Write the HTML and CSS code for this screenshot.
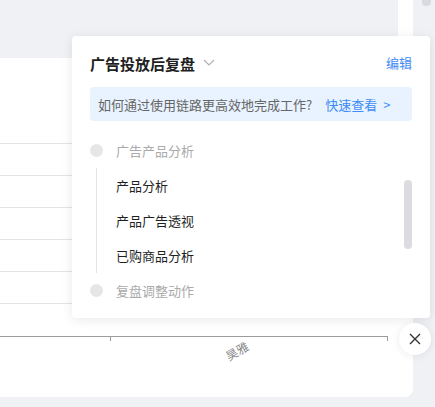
FILE: index.html
```html
<!DOCTYPE html>
<html lang="zh">
<head>
<meta charset="utf-8">
<link rel="stylesheet" href="styles.css">
</head>
<body>
<div class="page">
  <div class="top-row">
    <div class="top-strip"></div>
    <div class="page-thumb"></div>
  </div>
  <div class="card">
    <div class="chart">
      <div class="grid-line"></div>
      <div class="grid-line"></div>
      <div class="grid-line"></div>
      <div class="grid-line"></div>
      <div class="grid-line"></div>
      <div class="grid-line"></div>
      <div class="axis">
        <span class="tick tick-a"></span>
        <span class="tick tick-b"></span>
        <span class="axis-label">昊雅</span>
      </div>
    </div>
  </div>

  <div class="popup">
    <div class="popup-head">
      <div class="title">广告投放后复盘
        <svg class="chev" width="12" height="7" viewBox="0 0 12 7"><path d="M1 1l5 5 5-5" fill="none" stroke="#b0b0b0" stroke-width="1.2"/></svg>
      </div>
      <a class="edit">编辑</a>
    </div>
    <div class="tip">
      <span class="tip-text">如何通过使用链路更高效地完成工作?</span>
      <span class="tip-link">快速查看<span class="tip-arrow">&gt;</span></span>
    </div>
    <div class="timeline">
      <div class="group-row"><span class="dot"></span><span class="group-name">广告产品分析</span></div>
      <div class="children">
        <div class="child">产品分析</div>
        <div class="child">产品广告透视</div>
        <div class="child">已购商品分析</div>
      </div>
      <div class="group-row"><span class="dot"></span><span class="group-name">复盘调整动作</span></div>
    </div>
    <div class="scroll-thumb"></div>
  </div>

  <button class="close" aria-label="关闭">
    <svg width="12" height="12" viewBox="0 0 12 12"><path d="M1 1l10 10M11 1L1 11" stroke="#333" stroke-width="1.4" fill="none"/></svg>
  </button>
</div>
</body>
</html>
```
FILE: styles.css
```css
* { box-sizing: border-box; }
html, body { margin: 0; padding: 0; }
body {
  background: #f0f1f5;
  font-family: "Noto Sans CJK SC", "Noto Sans", sans-serif;
  width: 435px;
  height: 407px;
  overflow: hidden;
}
.page { position: relative; width: 435px; height: 407px; }
.top-row { display: flex; height: 58px; padding-left: 398px; }
.top-strip { width: 15px; height: 58px; background: #fff; }
.page-thumb {
  width: 9px; height: 6px; margin-left: 9px;
  background: #d9dadf; border-radius: 0 0 4px 4px;
}
.card {
  width: 413px;
  height: 339px;
  background: #fff;
  border-radius: 0 8px 8px 0;
  padding-top: 85px;
}
.chart { width: 388px; display: flex; flex-direction: column; gap: 31px; }
.grid-line { height: 1px; background: #e3e3e3; }
.axis { position: relative; height: 1px; background: #9c9c9c; margin-top: 1px; }
.tick { position: absolute; top: 0; width: 1px; height: 5px; background: #9c9c9c; }
.tick-a { left: 110px; }
.tick-b { left: 387px; }
.axis-label {
  position: absolute; left: 225px; top: 8px;
  font-size: 12px; color: #8a8a8a; line-height: 14px;
  transform: rotate(-30deg);
}
.popup {
  position: absolute; left: 72px; top: 36px;
  width: 358px; height: 282px;
  background: #fff;
  border-radius: 4px;
  box-shadow: 0 2px 12px rgba(0, 0, 0, 0.09);
  padding: 17px 18px 0 18px;
}
.popup-head { display: flex; justify-content: space-between; align-items: center; height: 20px; }
.title { font-size: 15px; font-weight: 700; color: #1f1f1f; display: flex; align-items: center; gap: 8px; }
.chev { margin-top: -2px; }
.edit { font-size: 13px; color: #3f8cf6; margin-top: -2px; }
.tip {
  margin-top: 14px; height: 34px;
  background: #e8f3ff; border-radius: 4px;
  display: flex; align-items: center; padding-left: 8px; gap: 13px;
  font-size: 13px;
}
.tip-text { color: #666; }
.tip-link { color: #3f8cf6; display: flex; align-items: center; }
.tip-arrow { margin-left: 6px; }
.timeline { margin-top: 12px; }
.group-row { display: flex; align-items: center; height: 35px; gap: 13px; }
.dot { width: 13px; height: 13px; border-radius: 50%; background: #e6e6e6; }
.group-name { font-size: 13px; color: #aaa; }
.children { margin-left: 6px; border-left: 1px solid #e5e5e5; }
.child { height: 35px; display: flex; align-items: center; padding-left: 19px; font-size: 13px; color: #1f1f1f; }
.scroll-thumb {
  position: absolute; right: 18px; top: 144px;
  width: 8px; height: 69px; border-radius: 4px; background: #dcdce0;
}
.close {
  position: absolute; left: 399px; top: 323px;
  width: 32px; height: 32px; border-radius: 50%;
  border: none; background: #fff; padding: 0;
  box-shadow: 0 1px 8px rgba(0, 0, 0, 0.08);
  display: flex; align-items: center; justify-content: center;
}
```
